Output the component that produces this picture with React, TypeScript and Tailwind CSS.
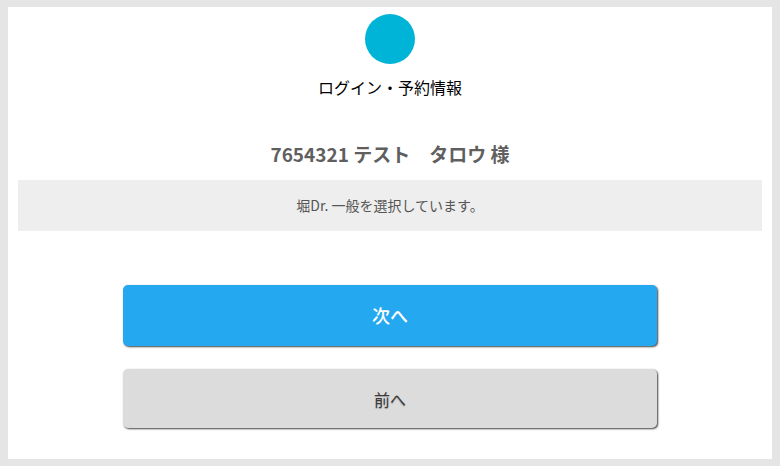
export default function App() {
	return (
		<div
			className="min-h-[466px] w-full bg-[#e5e5e5] px-2 pt-[7px] pb-[7px]"
			style={{ fontFamily: '"Noto Sans CJK JP", "Noto Sans", sans-serif' }}
		>
			<div className="flex h-[452px] flex-col items-center bg-white pt-[7px]">
				<div className="h-[50px] w-[50px] rounded-full bg-[#00b4d8]" />
				<h1 className="mt-[11px] text-[16px] leading-6 text-black">ログイン・予約情報</h1>

				<p className="mt-[41px] text-[19px] leading-[28px] font-bold text-[#5f5f5f]">
					7654321 テスト　タロウ 様
				</p>

				<div className="mt-[12px] flex h-[51px] w-[calc(100%-20px)] items-center justify-center bg-[#eeeeee]">
					<span className="text-[14px] text-[#555555]">堀Dr. 一般を選択しています。</span>
				</div>

				<button className="mt-[54px] flex h-[61px] w-[70%] items-center justify-center rounded-[5px] bg-[#24a8f0] text-[18px] font-medium text-white shadow-[1px_1px_2px_rgba(0,0,0,0.75)]">
					次へ
				</button>
				<button className="mt-[23px] flex h-[59px] w-[70%] items-center justify-center rounded-[5px] bg-[#dcdcdc] text-[16px] text-[#3a3a3a] shadow-[1px_1px_2px_rgba(0,0,0,0.75)] [text-shadow:0_1px_1px_rgba(0,0,0,0.3)]">
					前へ
				</button>
			</div>
		</div>
	);
}
